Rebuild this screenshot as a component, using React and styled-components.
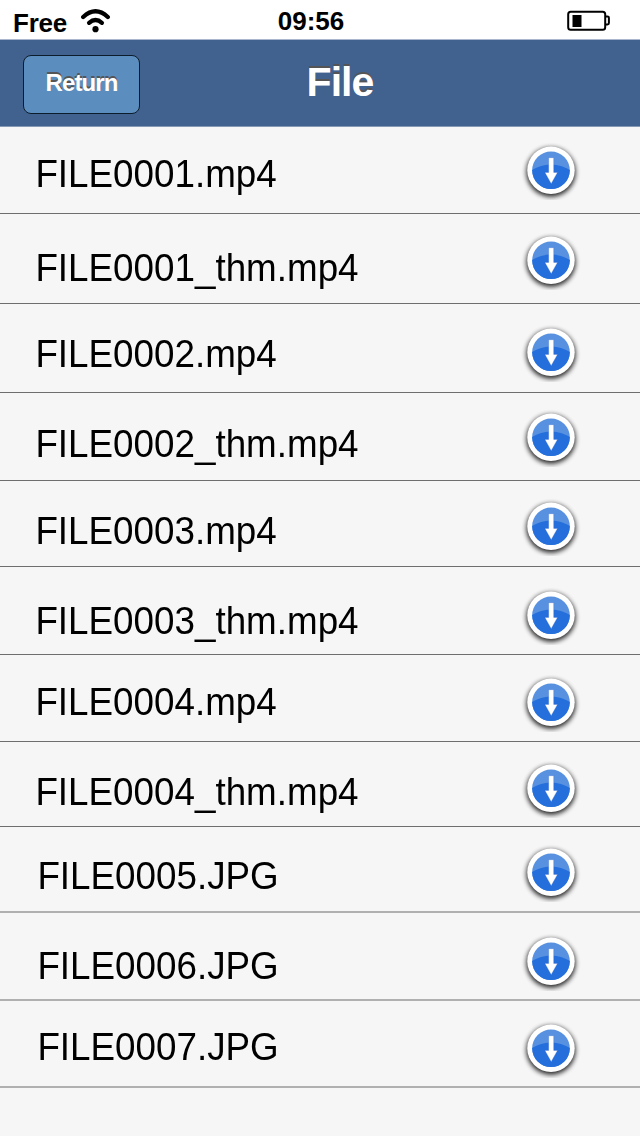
import React, { Component } from 'react';
import styled, { createGlobalStyle } from 'styled-components';

const GlobalStyle = createGlobalStyle`
  body {
    margin: 0;
    background: #f6f6f6;
    font-family: "Liberation Sans", Arial, sans-serif;
  }
`;

const Screen = styled.div`
  width: 640px;
  height: 1136px;
  overflow: hidden;
  background: #f6f6f6;
`;

const StatusBar = styled.div`
  display: grid;
  grid-template-columns: 1fr auto 1fr;
  height: 40px;
  box-sizing: border-box;
  background: #fff;
  border-bottom: 1px solid #a9b6cd;
  color: #000;
  font-size: 26px;
  font-weight: bold;
  line-height: 30px;
`;

const Carrier = styled.div`
  display: flex;
  padding: 8px 0 0 13px;
  letter-spacing: -0.2px;
  svg {
    margin: 0 0 0 13px;
  }
`;

const Clock = styled.div`
  padding-top: 6px;
  margin-right: 18px;
`;

const Battery = styled.div`
  justify-self: end;
  padding: 10px 30px 0 0;
  svg {
    display: block;
  }
`;

const Header = styled.header`
  display: grid;
  grid-template-columns: 1fr auto 1fr;
  height: 87px;
  box-sizing: border-box;
  background: #41618f;
  border-bottom: 1px solid #8598b6;
  color: #fff;
`;

const ReturnBtn = styled.button`
  width: 117px;
  height: 59px;
  margin: 15px 0 0 23px;
  padding: 0 0 3px;
  border: 1px solid #0d1c2b;
  border-radius: 8px;
  background: #5b8dbe;
  color: #fff;
  font: bold 24px "Liberation Sans", Arial, sans-serif;
  letter-spacing: -0.9px;
  text-shadow: 0 -2px 0 #555;
`;

const Title = styled.h1`
  margin: 19px 0 0;
  padding-left: 40px;
  font-size: 41px;
  line-height: 46px;
  letter-spacing: -0.9px;
  text-shadow: 0 -2px 0 #555;
`;

const FileList = styled.ul`
  margin: 0;
  padding: 0;
  list-style-type: none;
`;

const FileRow = styled.li`
  display: flex;
  align-items: flex-start;
  justify-content: space-between;
  box-sizing: border-box;
  height: ${props => props.$height}px;
  padding-right: 59px;
  border-bottom: ${props => props.$photo ? '2px solid #b0b0b0' : '1px solid #6e6e6e'};
`;

const FileName = styled.span`
  padding-left: ${props => props.$photo ? 37.4 : 35.4}px;
  margin-top: ${props => props.$top}px;
  color: #000;
  font-size: 36.8px;
  line-height: 42px;
  transform: scaleY(1.05);
`;

const DownloadBtn = styled.button`
  width: 60px;
  height: 60px;
  margin-top: ${props => props.$top}px;
  padding: 0;
  border: none;
  background: none;
  svg {
    display: block;
  }
`;

// height includes the divider, text and icon are offsets from the row top
const files = [
  { name: 'FILE0001.mp4', height: 87, text: 26, icon: 13 },
  { name: 'FILE0001_thm.mp4', height: 90, text: 33, icon: 16 },
  { name: 'FILE0002.mp4', height: 89, text: 29, icon: 18 },
  { name: 'FILE0002_thm.mp4', height: 88, text: 30, icon: 14 },
  { name: 'FILE0003.mp4', height: 86, text: 29, icon: 15 },
  { name: 'FILE0003_thm.mp4', height: 88, text: 33, icon: 18 },
  { name: 'FILE0004.mp4', height: 87, text: 26, icon: 17 },
  { name: 'FILE0004_thm.mp4', height: 85, text: 29, icon: 16 },
  { name: 'FILE0005.JPG', height: 86, text: 28, icon: 15, photo: true },
  { name: 'FILE0006.JPG', height: 88, text: 32, icon: 18, photo: true },
  { name: 'FILE0007.JPG', height: 87, text: 25, icon: 17, photo: true }
];

const WifiIcon = () => (
  <svg width="32" height="26" viewBox="0 0 32 26" fill="none" stroke="#000" strokeWidth="4.3" strokeLinecap="round">
    <path d="M3.2 9 Q15.5 -2.4 27.8 9" />
    <path d="M9.1 14.8 Q15.5 9.4 21.9 14.8" />
    <circle cx="15.5" cy="21.2" r="3.1" fill="#000" stroke="none" />
  </svg>
);

const BatteryIcon = () => (
  <svg width="44" height="21" viewBox="0 0 44 21" fill="none" stroke="#000" strokeWidth="2">
    <rect x="2.2" y="1.8" width="37" height="18" rx="2.5" />
    <path d="M39.3 6.4 h2.2 q1.4 0 1.4 1.4 v5.2 q0 1.4 -1.4 1.4 h-2.2" />
    <rect x="6.5" y="5" width="9" height="12" fill="#000" stroke="none" />
  </svg>
);

const DownloadIcon = () => (
  <svg width="60" height="60" viewBox="0 0 60 60">
    <defs>
      <filter id="shadow" x="-30%" y="-30%" width="160%" height="160%">
        <feGaussianBlur stdDeviation="2.8" />
      </filter>
      <clipPath id="disc">
        <circle cx="30" cy="30.3" r="18.8" />
      </clipPath>
    </defs>
    <circle cx="30" cy="32.2" r="24.5" fill="#000" opacity="0.85" filter="url(#shadow)" />
    <circle cx="30" cy="30.3" r="23.7" fill="#fff" />
    <circle cx="30" cy="30.3" r="18.8" fill="#5891e0" />
    <ellipse cx="30" cy="45.3" rx="28" ry="20.7" fill="#246fdb" clipPath="url(#disc)" />
    <path d="M27.7 17.7 h5 v14.7 h3.8 l-6.3 11.3 l-6.3 -11.3 h3.8 z" fill="#fff" stroke="#3763c4" strokeWidth="0.3" />
  </svg>
);

class App extends Component {
  render() {
    return (
      <Screen>
        <GlobalStyle />
        <StatusBar>
          <Carrier>Free <WifiIcon /></Carrier>
          <Clock>09:56</Clock>
          <Battery><BatteryIcon /></Battery>
        </StatusBar>
        <Header>
          <div>
            <ReturnBtn>Return</ReturnBtn>
          </div>
          <Title>File</Title>
        </Header>
        <FileList>
          {files.map((file) => {
            return (
              <FileRow key={file.name} $height={file.height} $photo={file.photo}>
                <FileName $top={file.text} $photo={file.photo}>{file.name}</FileName>
                <DownloadBtn $top={file.icon} aria-label={"Download " + file.name}>
                  <DownloadIcon />
                </DownloadBtn>
              </FileRow>
            )
          })}
        </FileList>
      </Screen>
    );
  }
}

export default App;
